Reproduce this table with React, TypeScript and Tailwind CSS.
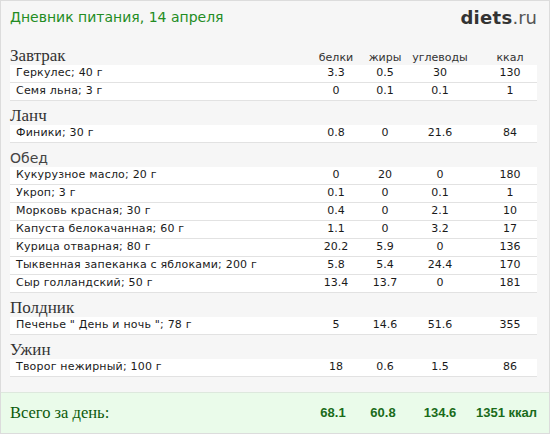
import React from "react";

type Item = { name: string; b: string; f: string; c: string; k: string };
type Meal = { title: string; sans?: boolean; items: Item[] };

const meals: Meal[] = [
  {
    title: "Завтрак",
    items: [
      { name: "Геркулес; 40 г", b: "3.3", f: "0.5", c: "30", k: "130" },
      { name: "Семя льна; 3 г", b: "0", f: "0.1", c: "0.1", k: "1" },
    ],
  },
  {
    title: "Ланч",
    items: [{ name: "Финики; 30 г", b: "0.8", f: "0", c: "21.6", k: "84" }],
  },
  {
    title: "Обед",
    sans: true,
    items: [
      { name: "Кукурузное масло; 20 г", b: "0", f: "20", c: "0", k: "180" },
      { name: "Укроп; 3 г", b: "0.1", f: "0", c: "0.1", k: "1" },
      { name: "Морковь красная; 30 г", b: "0.4", f: "0", c: "2.1", k: "10" },
      { name: "Капуста белокачанная; 60 г", b: "1.1", f: "0", c: "3.2", k: "17" },
      { name: "Курица отварная; 80 г", b: "20.2", f: "5.9", c: "0", k: "136" },
      { name: "Тыквенная запеканка с яблоками; 200 г", b: "5.8", f: "5.4", c: "24.4", k: "170" },
      { name: "Сыр голландский; 50 г", b: "13.4", f: "13.7", c: "0", k: "181" },
    ],
  },
  {
    title: "Полдник",
    items: [{ name: "Печенье \" День и ночь \"; 78 г", b: "5", f: "14.6", c: "51.6", k: "355" }],
  },
  {
    title: "Ужин",
    items: [{ name: "Творог нежирный; 100 г", b: "18", f: "0.6", c: "1.5", k: "86" }],
  },
];

const sans = "font-['DejaVu_Sans',Verdana,sans-serif]";
const serif = "font-['Liberation_Serif',serif]";

function Cols({ b, f, c, k }: { b: string; f: string; c: string; k: string }) {
  return (
    <>
      <span className="w-[50px] text-center">{b}</span>
      <span className="w-[48px] text-center">{f}</span>
      <span className="w-[62px] text-center">{c}</span>
      <span className="w-[66px] pl-[12px] text-center">{k}</span>
    </>
  );
}

function MealBlock({ meal, first }: { meal: Meal; first: boolean }) {
  return (
    <div>
      <div className="flex items-baseline h-[24px] pt-[7px]">
        <span
          className={
            meal.sans
              ? `flex-1 ${sans} text-[14px] leading-[16px] text-[#444]`
              : `flex-1 ${serif} text-[17px] leading-[16px] text-[#333]`
          }
        >
          {meal.title}
        </span>
        {first && (
          <span className={`flex ${sans} text-[11px] text-[#333]`}>
            <Cols b="белки" f="жиры" c="углеводы" k="ккал" />
          </span>
        )}
      </div>
      {meal.items.map((it) => (
        <div
          key={it.name}
          className={`flex items-center h-[18px] bg-white border-b border-[#e2e2e2] ${sans} text-[11px] text-[#1a1a1a]`}
        >
          <span className="flex-1 pl-[6px] whitespace-nowrap tracking-[0.2px]">{it.name}</span>
          <Cols b={it.b} f={it.f} c={it.c} k={it.k} />
        </div>
      ))}
    </div>
  );
}

export default function App() {
  return (
    <div className="w-[550px] h-[434px] overflow-hidden border border-[#dcdcdc] bg-[#f6f6f6] flex flex-col">
      <div className="flex justify-between items-start h-[40px] pl-[9px] pr-[12px] pt-[6px]">
        <h1 className={`${sans} text-[14px] leading-[20px] text-[#238c23]`}>
          Дневник питания, 14 апреля
        </h1>
        <div className={`${sans} text-[18px] leading-[20px] pt-[1px]`}>
          <span className="font-bold text-[#333] tracking-[0.3px]">diets</span>
          <span className="text-[#555]">.ru</span>
        </div>
      </div>

      <div className="pl-[9px] pr-[12px]">
        {meals.map((m, i) => (
          <MealBlock key={m.title} meal={m} first={i === 0} />
        ))}
      </div>

      <div className="mt-auto h-[41px] bg-[#eafbea] border-t border-[#dde8dd] flex items-center pl-[9px] pr-[12px]">
        <span className={`flex-1 ${serif} text-[16.5px] text-[#0c5a0c]`}>Всего за день:</span>
        <div className="flex font-['Liberation_Sans',Arial,sans-serif] font-bold text-[13px] text-[#1a6b1a]">
          <span className="w-[44px] text-center">68.1</span>
          <span className="w-[56px] text-center">60.8</span>
          <span className="w-[58px] text-center">134.6</span>
          <span className="w-[68px] text-right">1351 ккал</span>
        </div>
      </div>
    </div>
  );
}
